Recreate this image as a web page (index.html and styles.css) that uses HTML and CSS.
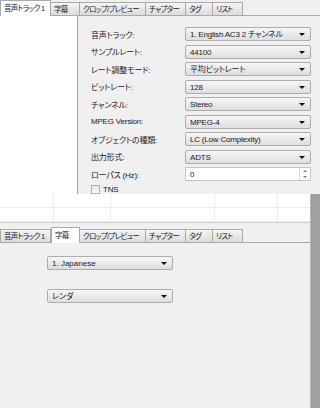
FILE: index.html
```html
<!DOCTYPE html>
<html lang="ja">

<head>
  <meta charset="UTF-8">
  <title>音声トラック</title>
  <link rel="stylesheet" href="styles.css">
</head>

<body>
  <section class="pane top">
    <ul class="tabs">
      <li class="tab active">音声トラック 1</li>
      <li class="tab">字幕</li>
      <li class="tab">クロップ/プレビュー</li>
      <li class="tab">チャプター</li>
      <li class="tab">タグ</li>
      <li class="tab">リスト</li>
    </ul>
    <div class="pane-body">
      <div class="sidebar"></div>
      <div class="form">
        <span class="label">音声トラック:</span>
        <div class="select">1. English AC3 2 チャンネル</div>
        <span class="label">サンプルレート:</span>
        <div class="select">44100</div>
        <span class="label">レート調整モード:</span>
        <div class="select">平均ビットレート</div>
        <span class="label">ビットレート:</span>
        <div class="select">128</div>
        <span class="label">チャンネル:</span>
        <div class="select">Stereo</div>
        <span class="label">MPEG Version:</span>
        <div class="select">MPEG-4</div>
        <span class="label">オブジェクトの種類:</span>
        <div class="select">LC (Low Complexity)</div>
        <span class="label">出力形式:</span>
        <div class="select">ADTS</div>
        <span class="label">ローパス (Hz):</span>
        <div class="spin">0<span class="spin-btns"><i class="up"></i><i class="down"></i></span></div>
        <span class="check"><i class="box"></i>TNS</span>
      </div>
    </div>
  </section>

  <div class="lower">
    <div class="lower-main">
      <div class="list">
        <div class="list-row">
          <span class="cell c1"></span>
          <span class="cell c2"></span>
          <span class="cell c3"></span>
          <span class="cell c4"></span>
        </div>
        <div class="list-row">
          <span class="cell c1"></span>
          <span class="cell c2"></span>
          <span class="cell c3"></span>
          <span class="cell c4"></span>
        </div>
      </div>
      <section class="pane bottom">
        <ul class="tabs">
          <li class="tab">音声トラック 1</li>
          <li class="tab active">字幕</li>
          <li class="tab">クロップ/プレビュー</li>
          <li class="tab">チャプター</li>
          <li class="tab">タグ</li>
          <li class="tab">リスト</li>
        </ul>
        <div class="subs">
          <div class="select wide">1. Japanese</div>
          <div class="select wide">レンダ</div>
        </div>
      </section>
    </div>
    <div class="scroll"></div>
  </div>
</body>

</html>
```

FILE: styles.css
```css
body {
  margin: 0;
  background: #f0f0f0;
  color: #1a1a1a;
  font-family: "Liberation Sans", "Noto Sans CJK JP", sans-serif;
  font-size: 8px;
  font-feature-settings: "palt" 1;
  overflow: hidden;
}

.tabs {
  display: flex;
  margin: 0;
  padding: 0;
  height: 16px;
  list-style: none;
  border-bottom: 1px solid #a9a9a9;
  box-sizing: border-box;
}

.tab {
  height: 13px;
  margin-top: 2px;
  padding: 0 0 0 3px;
  font-size: 7.5px;
  line-height: 13px;
  letter-spacing: -0.7px;
  border: 1px solid #a9a9a9;
  border-bottom: none;
  border-left: none;
  box-sizing: border-box;
  background: linear-gradient(#f4f4f4, #dcdcdc);
  white-space: nowrap;
  overflow: hidden;
}

.tab:nth-child(1) {
  width: 51px;
}

.tab:nth-child(2) {
  width: 29px;
}

.tab:nth-child(3) {
  width: 66px;
}

.tab:nth-child(4) {
  width: 40px;
}

.tab:nth-child(5) {
  width: 27px;
}

.tab:nth-child(6) {
  width: 30px;
}

.tab.active {
  height: 16px;
  margin-top: 0;
  margin-bottom: -1px;
  line-height: 15px;
  background: #fff;
  border-left: 1px solid #a9a9a9;
}

.tab:first-child {
  border-left: 1px solid #a9a9a9;
}

/* top window */
.top {
  height: 194px;
  overflow: hidden;
}

.pane-body {
  display: flex;
  height: 178px;
}

.sidebar {
  width: 77px;
  background: #fff;
  border-right: 1px solid #a0a0a0;
}

.form {
  display: grid;
  grid-template-columns: 94px 126px;
  grid-auto-rows: 17.5px;
  padding: 11px 0 0 13px;
  letter-spacing: -0.2px;
}

.label {
  align-self: center;
  margin-top: -3px;
  white-space: nowrap;
}

.select,
.spin {
  position: relative;
  height: 14px;
  padding-left: 4px;
  line-height: 13px;
  border: 1px solid #acacac;
  border-radius: 2px;
  box-sizing: border-box;
  background: linear-gradient(#f6f6f6, #dedede);
  white-space: nowrap;
}

.select::after {
  content: "";
  position: absolute;
  right: 5px;
  top: 5px;
  border: 3px solid transparent;
  border-top: 3px solid #111;
  border-bottom: none;
}

.spin {
  background: #fff;
  border-color: #c4c4c4;
  border-radius: 0;
}

.spin-btns {
  position: absolute;
  right: 0;
  top: 0;
  bottom: 0;
  width: 10px;
  display: flex;
  flex-direction: column;
  border-left: 1px solid #ddd;
}

.spin-btns i {
  flex: 1;
  position: relative;
}

.spin-btns i::after {
  content: "";
  position: absolute;
  left: 3px;
  top: 2px;
  border: 2px solid transparent;
}

.spin-btns .up::after {
  border-bottom: 2px solid #777;
  border-top: none;
}

.spin-btns .down::after {
  border-top: 2px solid #777;
  border-bottom: none;
}

.check {
  display: flex;
  align-items: center;
  align-self: start;
  gap: 3px;
  height: 9px;
}

.box {
  width: 7px;
  height: 7px;
  border: 1px solid #b0b0b0;
  background: linear-gradient(#e6e6e6, #fafafa);
}

/* lower window */
.lower {
  display: flex;
  height: 214px;
}

.lower-main {
  flex: 1;
}

.scroll {
  width: 10px;
  background: #a0a0a0;
  border-left: 1px solid #b4b4b4;
}

.list {
  height: 27px;
  background: #fff;
  border-bottom: 2px solid #d0d0d0;
}

.list-row {
  display: flex;
  height: 13px;
  border-bottom: 1px solid #ececec;
}

.cell {
  border-right: 1px solid #ececec;
}

.c1 {
  width: 53px;
}

.c2 {
  width: 56px;
}

.c3 {
  width: 103px;
}

.c4 {
  width: 62px;
}

.bottom {
  padding-top: 4px;
}

.bottom .tabs {
  width: 310px;
}

.subs {
  display: flex;
  flex-direction: column;
  gap: 19px;
  padding: 13px 0 0 47px;
}

.select.wide {
  width: 126px;
}
```
